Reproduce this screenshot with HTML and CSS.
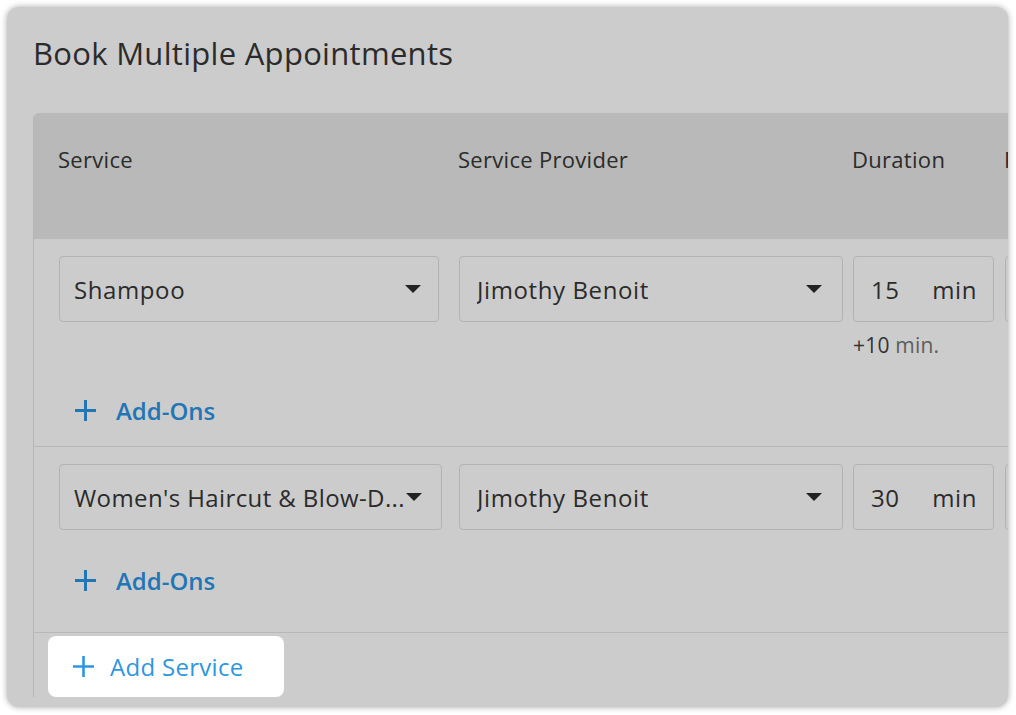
FILE: index.html
```html
<!DOCTYPE html>
<html lang="en">
<head>
<meta charset="utf-8">
<title>Book Multiple Appointments</title>
<link rel="stylesheet" href="styles.css">
</head>
<body>
<div class="page">
  <div class="card">
    <h1 class="title">Book Multiple Appointments</h1>
    <div class="table">
      <div class="thead grid">
        <div class="th">Service</div>
        <div class="th">Service Provider</div>
        <div class="th">Duration</div>
        <div class="th">Price</div>
      </div>

      <div class="row row-first">
        <div class="grid fields">
          <div class="cell">
            <div class="select select-service"><span class="select-text">Shampoo</span><i class="caret"></i></div>
          </div>
          <div class="cell">
            <div class="select select-provider"><span class="select-text">Jimothy Benoit</span><i class="caret"></i></div>
          </div>
          <div class="cell">
            <div class="duration"><span>15</span><span>min</span></div>
            <div class="note"><span class="note-num">+10</span> min.</div>
          </div>
          <div class="cell">
            <div class="duration"></div>
          </div>
        </div>
        <div class="addons addons-first">
          <svg class="plus" width="23" height="23" viewBox="0 0 23 23"><path d="M11.5 1v21M1 11.5h21" stroke="currentColor" stroke-width="3" fill="none"/></svg>
          <span>Add-Ons</span>
        </div>
      </div>

      <div class="row row-second">
        <div class="grid fields">
          <div class="cell">
            <div class="select select-service-wide"><span class="select-text select-text-tight">Women's Haircut &amp; Blow-D...</span><i class="caret caret-tight"></i></div>
          </div>
          <div class="cell">
            <div class="select select-provider"><span class="select-text">Jimothy Benoit</span><i class="caret"></i></div>
          </div>
          <div class="cell">
            <div class="duration"><span>30</span><span>min</span></div>
          </div>
          <div class="cell">
            <div class="duration"></div>
          </div>
        </div>
        <div class="addons addons-second">
          <svg class="plus" width="23" height="23" viewBox="0 0 23 23"><path d="M11.5 1v21M1 11.5h21" stroke="currentColor" stroke-width="3" fill="none"/></svg>
          <span>Add-Ons</span>
        </div>
      </div>

      <div class="footer">
        <button class="add-service" type="button">
          <svg class="plus" width="23" height="23" viewBox="0 0 23 23"><path d="M11.5 1v21M1 11.5h21" stroke="currentColor" stroke-width="2.6" fill="none"/></svg>
          <span>Add Service</span>
        </button>
      </div>
    </div>
  </div>
</div>
</body>
</html>
```
FILE: styles.css
```css
* { box-sizing: border-box; }

body {
  margin: 0;
  background: #ffffff;
  font-family: "Open Sans", "Liberation Sans", sans-serif;
  color: #2b2b2b;
}

.page {
  padding: 7px;
}

.card {
  width: 1001px;
  height: 700px;
  background: #cccccc;
  border-radius: 12px;
  overflow: hidden;
  box-shadow: 0 0 6px rgba(0, 0, 0, 0.35);
  padding: 26px 0 0 26px;
}

.title {
  margin: 0;
  font-size: 31px;
  line-height: 40px;
  font-weight: 400;
  letter-spacing: 0.3px;
  color: #2b2b2b;
}

.table {
  margin-top: 40px;
  width: 1300px;
  border-left: 1px solid #b6b6b6;
  border-top-left-radius: 6px;
  overflow: hidden;
}

.grid {
  display: grid;
  grid-template-columns: 400px 394px 152px 200px;
  padding-left: 25px;
  align-items: start;
}

.thead {
  height: 126px;
  background: #b9b9b9;
  padding-top: 31px;
}

.th {
  font-size: 22px;
  line-height: 30px;
  letter-spacing: 0.3px;
  margin-left: -1px;
  color: #2b2b2b;
}

.row {
  border-bottom: 1px solid #b8b8b8;
  padding-top: 17px;
}

.row-first { padding-bottom: 16px; }
.row-second { padding-bottom: 32px; }

.select,
.duration {
  display: flex;
  align-items: center;
  height: 66px;
  border: 1px solid #b3b3b3;
  border-radius: 4px;
  font-size: 24px;
  letter-spacing: 0.6px;
  color: #2b2b2b;
}

.select {
  justify-content: space-between;
  padding: 0 17px 0 14px;
}

.select-service { width: 380px; }
.select-service-wide { width: 383px; padding-right: 19px; }
.select-provider { width: 384px; padding-right: 20px; padding-left: 17px; }

.select-text {
  flex: 1;
  min-width: 0;
  white-space: nowrap;
  overflow: hidden;
}

.select-text-tight { letter-spacing: 0.4px; }

.caret {
  flex: none;
  width: 0;
  height: 0;
  border-left: 8px solid transparent;
  border-right: 8px solid transparent;
  border-top: 8px solid #222222;
  margin-left: 8px;
}

.caret-tight { margin-left: 0; }

.duration {
  width: 141px;
  justify-content: space-between;
  padding: 0 16px 0 17px;
}

.note {
  margin-top: 10px;
  font-size: 21px;
  line-height: 26px;
  letter-spacing: 0.2px;
  color: #5e5e5e;
}

.note-num { color: #333333; }

.addons {
  display: flex;
  align-items: center;
  height: 40px;
  padding-left: 40px;
  gap: 19px;
  color: #2176b5;
  font-size: 24px;
  font-weight: 600;
}

.addons-first { margin-top: 32px; }
.addons-second { margin-top: 30px; }

.plus { flex: none; display: block; }

.footer {
  padding: 3px 0 0 14px;
}

.add-service {
  display: flex;
  align-items: center;
  gap: 15px;
  width: 236px;
  height: 61px;
  padding: 0 0 0 24px;
  border: none;
  border-radius: 8px;
  background: #ffffff;
  color: #2e96df;
  font-family: inherit;
  font-size: 24px;
  font-weight: 400;
  letter-spacing: 0.3px;
  cursor: pointer;
}
```
